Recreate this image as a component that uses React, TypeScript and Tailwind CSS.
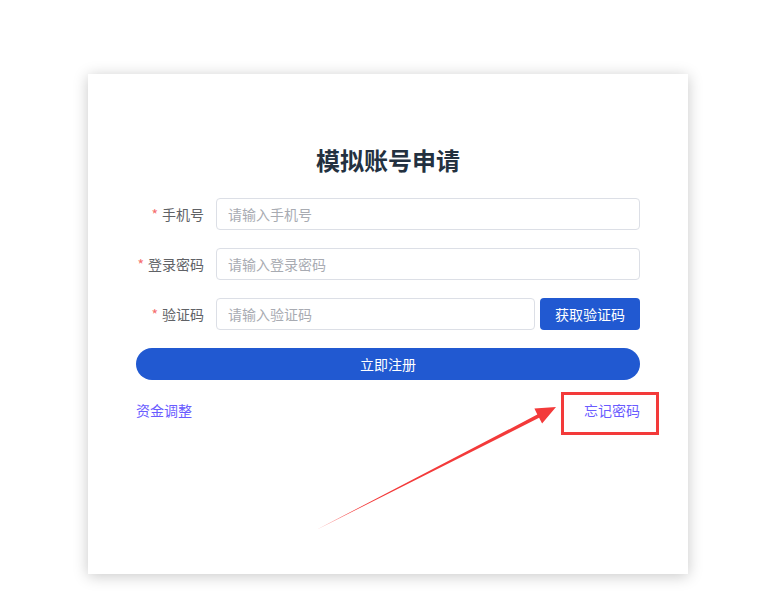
import { useState } from "react"

const FIELDS = [
  { label: "手机号", placeholder: "请输入手机号", type: "text" },
  { label: "登录密码", placeholder: "请输入登录密码", type: "password" },
]

type FieldRowProps = {
  label: string
  children: React.ReactNode
}
const FieldRow = ({ label, children }: FieldRowProps) => (
  <div className="flex items-center h-8">
    <label className="w-20 shrink-0 pr-3 text-right text-sm text-[#606266]">
      <span className="text-[#f56c6c] mr-1">*</span>
      {label}
    </label>
    <div className="flex grow gap-[5px] h-full">{children}</div>
  </div>
)

const Input = ({ placeholder, type }: { placeholder: string; type: string }) => (
  <input
    type={type}
    placeholder={placeholder}
    className="grow min-w-0 h-full rounded border border-[#dcdfe6] px-[11px] text-sm text-[#606266] placeholder:text-[#a8abb2] outline-none"
  />
)

export default function App() {
  const [code, setCode] = useState("")

  return (
    <div
      className="min-h-[610px] bg-white pt-[74px] pl-[88px]"
      style={{ fontFamily: '"Noto Sans CJK SC", "Noto Sans", sans-serif' }}>
      <div className="relative w-[600px] h-[500px] bg-white shadow-[0_2px_14px_rgba(0,0,0,0.22)] px-12 pt-[71px]">
        <h2 className="text-center text-2xl leading-[30px] font-bold text-[#233140]">
          模拟账号申请
        </h2>

        {/* Form */}
        <div className="mt-[23px] flex flex-col gap-[18px]">
          {FIELDS.map((field) => (
            <FieldRow key={field.label} label={field.label}>
              <Input placeholder={field.placeholder} type={field.type} />
            </FieldRow>
          ))}
          <FieldRow label="验证码">
            <input
              value={code}
              onChange={(e) => setCode(e.target.value)}
              placeholder="请输入验证码"
              className="grow min-w-0 h-full rounded border border-[#dcdfe6] px-[11px] text-sm text-[#606266] placeholder:text-[#a8abb2] outline-none"
            />
            <button className="w-[100px] shrink-0 h-full rounded bg-[#2159d1] text-sm text-white">
              获取验证码
            </button>
          </FieldRow>
          <button className="h-8 w-full rounded-full bg-[#2159d1] text-sm text-white">
            立即注册
          </button>
        </div>

        {/* Links */}
        <div className="mt-5 flex justify-between text-sm leading-5 text-[#6a5cff]">
          <a className="cursor-pointer">资金调整</a>
          <a className="cursor-pointer">忘记密码</a>
        </div>

        {/* Annotation */}
        <div className="absolute left-[473px] top-[318px] w-[98px] h-[43px] border-[3px] border-[#f33a3a]" />
        <svg
          className="absolute left-0 top-0 pointer-events-none"
          width="600"
          height="500"
          viewBox="88 74 600 500">
          <polygon
            points="316,530 537.3,414.6 534.4,408.6 556,407 542.1,423.6 539.1,417.8"
            fill="#f33a3a"
          />
        </svg>
      </div>
    </div>
  )
}
